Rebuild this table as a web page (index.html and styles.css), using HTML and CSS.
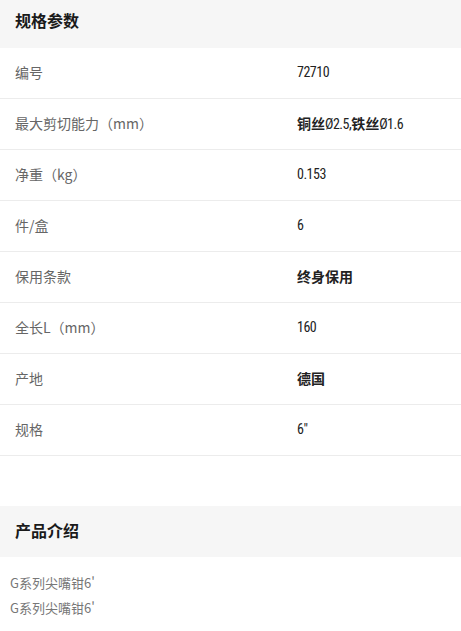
FILE: index.html
```html
<!DOCTYPE html>
<html lang="zh-CN">
<head>
<meta charset="utf-8">
<link rel="stylesheet" href="styles.css">
</head>
<body>
<section class="spec">
  <h2 class="sec-title first">规格参数</h2>
  <div class="rows">
    <div class="row"><span class="label">编号</span><span class="val num">72710</span></div>
    <div class="row"><span class="label">最大剪切能力（mm）</span><span class="val"><b>铜丝</b><span class="num">Ø2.5,</span><b>铁丝</b><span class="num">Ø1.6</span></span></div>
    <div class="row"><span class="label">净重（kg）</span><span class="val num">0.153</span></div>
    <div class="row"><span class="label">件/盒</span><span class="val num">6</span></div>
    <div class="row"><span class="label">保用条款</span><span class="val"><b>终身保用</b></span></div>
    <div class="row"><span class="label">全长L（mm）</span><span class="val num">160</span></div>
    <div class="row"><span class="label">产地</span><span class="val"><b>德国</b></span></div>
    <div class="row"><span class="label">规格</span><span class="val num">6"</span></div>
  </div>
</section>
<section class="intro">
  <h2 class="sec-title">产品介绍</h2>
  <div class="intro-body">
    <p>G系列尖嘴钳6'</p>
    <p>G系列尖嘴钳6'</p>
  </div>
</section>
</body>
</html>
```
FILE: styles.css
```css
* { box-sizing: border-box; }
html, body { margin: 0; padding: 0; background: #fff; }
body {
  font-family: "Noto Sans CJK SC", "Noto Sans", sans-serif;
  color: #222;
  width: 461px;
}
.sec-title {
  margin: 0;
  background: #f6f6f6;
  height: 51px;
  display: flex;
  align-items: center;
  padding-left: 15px;
  padding-bottom: 3px;
  font-size: 16px;
  font-weight: bold;
  color: #1a1a1a;
}
.sec-title.first { height: 48px; padding-bottom: 8px; }
.rows { display: flex; flex-direction: column; }
.row {
  height: 51px;
  display: flex;
  align-items: center;
  padding-bottom: 3px;
  border-bottom: 1px solid #ececec;
}
.label {
  width: 297px;
  padding-left: 15px;
  font-size: 14px;
  color: #666;
}
.val {
  font-size: 13px;
  color: #222;
}
.val b { font-weight: bold; font-size: 14px; }
.num {
  font-family: "Liberation Sans Narrow", "Roboto", sans-serif;
  font-stretch: condensed;
  font-size: 14px;
  letter-spacing: -0.5px;
}
.intro { margin-top: 50px; }
.intro-body { padding: 17px 0 0 10px; }
.intro-body p {
  margin: 0 0 7px;
  font-size: 13px;
  line-height: 18px;
  color: #777;
}
```
